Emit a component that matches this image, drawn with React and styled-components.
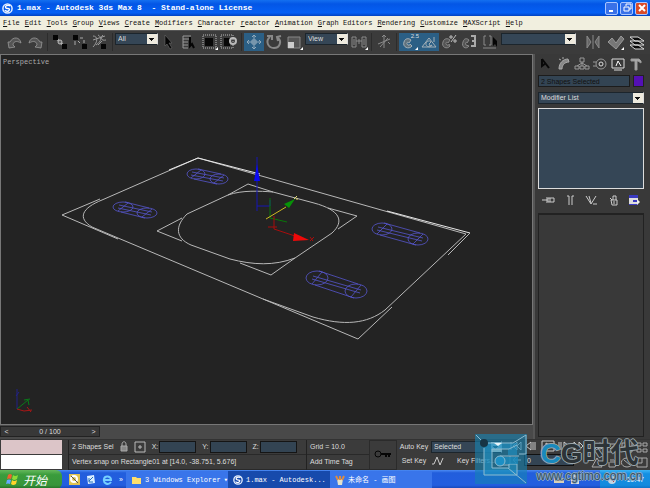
import React from "react";
import styled, { createGlobalStyle } from "styled-components";

const MENU = [
  ["F", "ile"], ["E", "dit"], ["T", "ools"], ["G", "roup"], ["V", "iews"],
  ["C", "reate"], ["M", "odifiers"], ["C", "haracter"], ["r", "eactor"],
  ["A", "nimation"], ["G", "raph Editors"], ["R", "endering"],
  ["C", "ustomize"], ["M", "AXScript"], ["H", "elp"],
];

const SwirlIcon = ({ size = 11 }) => (
  <svg width={size} height={size} viewBox="0 0 12 12" fill="none" aria-hidden="true">
    <circle cx="6" cy="6" r="5" stroke="#e6f0ff" strokeWidth="1.6" />
    <path d="M9 3C6 2 3 3 4 5s5 0 4 2.500-4 1.500-5 .5" stroke="#fff" strokeWidth="1.500" />
  </svg>
);

// toolbar glyphs share a 20x18 box
const glyphs = {
  undo: <path d="M3 9l1 6 6-1-2-2c0-3 3-5 8-2-1-6-8-7-11-1z" fill="#555" stroke="#999" strokeWidth=".8" />,
  redo: <path d="M17 9l-1 6-6-1 2-2c0-3-3-5-8-2 1-6 8-7 11-1z" fill="#555" stroke="#999" strokeWidth=".8" />,
  link: <><path d="M7 6l7 7" stroke="#aaa" strokeWidth="2" /><circle cx="10" cy="9" r="2" fill="#666" stroke="#bbb" /><path d="M3 2h5v5H3zM12 11h5v5h-5z" fill="#050505" stroke="none" /></>,
  unlink: <><path d="M5 8v4M8 8l2 2M10 5h3M14 7v3" stroke="#aaa" /><path d="M3 2h5v5H3zM12 11h5v5h-5z" fill="#050505" stroke="none" /></>,
  bind: <><path d="M3 3c5 0 5 6 0 11M8 2c4 2 4 6-2 10M13 2c-3 3-2 6 3 5M3 7l12-4M8 12l4-4" stroke="#999" /><path d="M11 11h5v5h-5z" fill="#050505" stroke="none" /></>,
  select: <path d="M6 2v11l2-2 3 5 2-1-3-5h3z" fill="#050505" stroke="#777" strokeWidth=".5" />,
  byName: <><path d="M4 3h8M4 6h6M4 9h5M4 12h5M4 15h5M4 3v12" stroke="#999" /><path d="M11 4v9l2-2 2 4" stroke="#050505" strokeWidth="2" /></>,
  region: <><path d="M4 2h13v13H4z" stroke="#bbb" strokeDasharray="1 1" /><path d="M6 5h8v8H6z" fill="#080808" stroke="none" /></>,
  windowing: <><path d="M2 2h12v13H2z" stroke="#bbb" strokeDasharray="1 1" /><path d="M5 5h6v8H5z" fill="#080808" stroke="none" /><circle cx="14" cy="8" r="3" stroke="#bbb" strokeWidth="2" /></>,
  move: <path d="M10 2v14M3 9h14M8 4l2-2 2 2M8 14l2 2 2-2M5 7L3 9l2 2M15 7l2 2-2 2M8 7h4v4H8z" stroke="#91a9ba" />,
  rotate: <path d="M6 4c-5 4-2 11 4 11 6 0 8-7 4-10M3 3h5v4M17 3l-4 1 1 4" stroke="#888" strokeWidth="2" />,
  scale: <><path d="M4 4h12v11H4z" fill="#555" stroke="#888" /><path d="M4 9h6v6H4z" fill="#ccc" stroke="none" /></>,
  pivot: <path d="M3 4h4v10H3zM13 4h4v10h-4zM7 8h6M10 6v5M5 6v6M15 6v6" />,
  manipulate: <path d="M10 3v12M4 11l12-5M6 14l8-9M8 4l2-2 2 2M14 9l2 2" />,
  snap: <path d="M13 13c-3 4-10 1-8-4 1-4 5-4 7-2l-2 3c-2-2-3 1-1 2s2-1 2-1z" fill="#60727d" stroke="#a5b1b8" />,
  angle: <><path d="M3 14L10 5l7 9z" stroke="#a5b1b8" /><path d="M13 12c-1 3-7 2-6-2 1-2 4-3 5-1l-2 2 1 2zM15 4v5" stroke="#a5b1b8" /></>,
  percent: <><path d="M11 13c-3 4-9 1-7-4 1-4 5-4 7-2l-2 3c-2-2-3 1-1 2s2-1 2-1z" fill="#555" /><path d="M11 3h2v2h-2zM15 7h2v2h-2zM17 2l-5 7" stroke="#bbb" /></>,
  spinner: <><path d="M10 13c-3 4-8 1-6-4 1-4 4-4 6-2l-2 3c-1-2-2 1-1 2z" fill="#555" /><path d="M12 3h4v10h-4M13 8h3" stroke="#aaa" strokeWidth="2" /></>,
  sets: <><path d="M6 3H4v9h2M9 3h2v9H9M3 15h13" /><path d="M13 4v9l2-2 2 3V8z" fill="#050505" stroke="none" /></>,
  mirror: <path d="M4 3v12l4-6zM16 3v12l-4-6zM10 2v14" fill="#666" />,
  align: <path d="M3 9l4-4 4 5 5-7 3 3-8 10z" fill="#777" stroke="#999" />,
  layers: <path d="M3 4h8l6 4H8zM3 8h8l6 4H8zM3 12h8l6 4H8z" fill="#0b0b0b" stroke="#ddd" />,
};

const Tool = ({ name, on, flyout, children }) => (
  <ToolButton type="button" aria-label={name} $on={on}>
    <svg width="20" height="18" viewBox="0 0 20 18" fill="none" stroke="#8a8a8a">
      {glyphs[name]}
      {flyout && <path d="M19 14v3h-3z" fill="#fff" stroke="none" />}
    </svg>
    {children && <ToolBadge>{children}</ToolBadge>}
  </ToolButton>
);

// capsule wireframe between two end ellipses, tilted along the slot
const Slot = ({ x1, y1, x2, y2, rx, ry }) => (
  <g stroke="#5656cc" strokeWidth=".8">
    <ellipse cx={x1} cy={y1} rx={rx} ry={ry} />
    <ellipse cx={x2} cy={y2} rx={rx} ry={ry} />
    <path d={`M${x1 + 2} ${y1 - ry}L${x2 + 2} ${y2 - ry}M${x1 - 2} ${y1 + ry}L${x2 - 2} ${y2 + ry}`} />
    <path d={`M${x1 - 4} ${y1 - 2}L${x2 + 5} ${y2 - 1}M${x1 - 5} ${y1 + 1}L${x2 + 4} ${y2 + 2}`} />
    <path d={`M${x1 + 5} ${y1 - ry + 1}L${x1 - 5} ${y1 + ry - 1}M${x2 + 5} ${y2 - ry + 1}L${x2 - 5} ${y2 + ry - 1}`} />
  </g>
);

const Scene = () => (
  <SceneSvg viewBox="1 55 531 369" fill="none" aria-label="Wireframe scene">
    <g stroke="#b8b8b8">
      <path d="M100 199L62 215l56 24" />
      <path d="M198 158L102 200c-20 8-25 18-10 27l26 11 145 61 50 18c31 9 54 7 72-7l81-76L198 158" />
      <path d="M169 170l29-12 62 16M387 211l83 22" stroke="#e8e8e8" />
      <path d="M470 233l-22 22M263 299l95 40 34-32" />
      <path d="M228 195l20-11 25 8M182 218l-25 13 25 10M328 208l29 8-19 13M240 263l31 12 24-17" />
      <path d="M228 195c14-5 32-4 45-3l41 11c26 7 31 18 18 30l-37 25c-21 8-42 7-65 1l-39-14c-16-7-16-19-4-31z" />
    </g>
    <Slot x1={196} y1={174} x2={219} y2={179} rx={9} ry={5} />
    <Slot x1={123} y1={207} x2={147} y2={213} rx={10} ry={5} />
    <Slot x1={382} y1={229} x2={418} y2={239} rx={10} ry={6} />
    <Slot x1={317} y1={278} x2={356} y2={291} rx={11} ry={7} />
    <path d="M257 157v54M257 206h13v-6" stroke="#1616b5" />
    <path d="M257 164l3 17h-6z" fill="#0909f2" />
    <path d="M270 198v20l17 4" stroke="#087608" />
    <path d="M266 219l20-12" stroke="#cdb821" />
    <path d="M284 204l11-5-6 9z" fill="#079207" />
    <path d="M294 199l3-3M296 199h2" stroke="#e5dc70" />
    <path d="M274 216v13l30 10M268 227h9M310 237l3 4M314 237l-4 4" stroke="#a80d0d" />
    <path d="M294 233l15 7-16 1z" fill="#ed0909" />
    <path d="M17 389v20M19 392l-3 4" stroke="#222288" />
    <path d="M17 409l11-9 1 5M24 400l6-1" stroke="#087c18" />
    <path d="M17 409l7 2 8-1M27 407l4 5" stroke="#a81616" />
  </SceneSvg>
);

const panelTabs = [
  ["Create", <path key="p" d="M4 3l7 9M4 3v7l4-3" stroke="#080808" strokeWidth="2" />],
  ["Modify", <path key="p" d="M3 13C3 7 7 3 12 3l1 3C8 6 6 10 6 13zM3 3l2 1M7 1v2" fill="#888" stroke="#aaa" />],
  ["Hierarchy", <path key="p" d="M6 2h4v4H6zM1 10h4v3H1zM6 10h4v3H6zM11 10h4v3h-4zM8 6v4M3 10l5-3 5 3" />],
  ["Motion", <g key="p"><circle cx="9" cy="8" r="5" /><circle cx="9" cy="8" r="2" stroke="#ddd" /><path d="M1 6h3M1 10h3" /></g>],
  ["Display", <g key="p"><path d="M2 3h12v9H2zM4 14h8" stroke="#ddd" /><path d="M6 10l2-5 3 5" stroke="#fff" /></g>],
  ["Utilities", <path key="p" d="M3 3h8l2 2v2l-3-2H9v9H7V5H3z" fill="#aaa" />],
];

const stackTools = [
  ["Pin stack", "M1 7h5M6 4v6M7 5h6v4H7zM9 5v4"],
  ["Show end result", "M6 3v9M9 3v9M4 3h2M9 3h2"],
  ["Make unique", "M2 3l5 8 5-8M5 3l2 7M9 11h4"],
  ["Remove modifier", "M5 7h6v5H6zM7 7V3h3v4M4 5l2 2M8 8v3"],
];

const playback = [
  ["Go to start", "M3 2v8M9 2L5 6l4 4zM13 2L9 6l4 4z"],
  ["Previous frame", "M7 2L2 6l5 4zM9 2v8M11 2v8"],
  ["Play", "M2 1h12v10H2zM6 3l5 3-5 3z"],
  ["Next frame", "M3 2v8M5 2v8M8 2l5 4-5 4z"],
  ["Go to end", "M2 2l4 4-4 4zM7 2l4 4-4 4zM13 2v8"],
];

const viewTools = [
  ["Zoom", "M2 11l4-4M10 2a3 3 0 100 6 3 3 0 000-6"],
  ["Zoom all", "M2 3h8v8H2zM5 8l7-6"],
  ["Zoom extents", "M2 2h4M2 2v4M12 2v4M8 11h4V8M4 5h5v4H4z"],
  ["Zoom extents all", "M2 2h4v3H2zM8 2h4v3H8zM2 8h4v3H2zM8 8h4v3H8z"],
  ["Field of view", "M7 2L2 11h10z"],
  ["Pan", "M4 6v5h6l2-5M6 7V3M8 7V3M10 7V4"],
  ["Arc rotate", "M7 2a5 4 0 100 9 5 4 0 000-9M4 4l6 5"],
  ["Maximize", "M2 2h10v9H2zM7 2v5H2"],
];

const LineIcon = ({ d, color = "#ccc" }) => (
  <svg width="15" height="14" viewBox="0 0 15 14" fill="none" stroke={color} aria-hidden="true">
    <path d={d} />
  </svg>
);

const Watermark = () => (
  <WatermarkBox>
    <svg width="52" height="50" viewBox="0 0 52 50" fill="none" aria-hidden="true">
      <path d="M0 0h52v50H0z" fill="#1583b4" fillOpacity=".6" />
      <path d="M9 14v27h33V30h-9v4H17V15h16v6h9V9H12" fill="#1f91c4" fillOpacity=".6" />
      <path d="M12 9h26L51 1v19h-7M9 14v27h33M17 15h17l8-4M17 15v19h16l18 15M42 41V30h-8v4" stroke="#8dbbd0" />
      <path d="M25 22h19M25 31h9" stroke="#8dbbd0" />
      <path d="M27 23h16v7H27z" fill="#1b8bbd" fillOpacity=".8" />
      <circle cx="25" cy="27" r="5" fill="#1c8fc4" stroke="#8dbbd0" />
      <path d="M1 1l6 6" stroke="#8dbbd0" />
      <circle cx="9" cy="9" r="4" fill="#173445" />
      <path d="M19 9l4 3 4-3z" fill="#eaf5fa" />
    </svg>
    <WatermarkText>
      <WatermarkTitle><b>C</b>G时代</WatermarkTitle>
      <WatermarkUrl>www.cgtimo.com.cn</WatermarkUrl>
    </WatermarkText>
  </WatermarkBox>
);

const App = () => (
  <>
    <GlobalStyle />
    <Desktop>
      <TitleBar>
        <SwirlIcon />
        <Title>{"1.max - Autodesk 3ds Max 8  - Stand-alone License"}</Title>
        <WindowButton type="button" aria-label="Minimize">
          <svg width="10" height="10"><path d="M2 7h4v2H2z" fill="#fff" /></svg>
        </WindowButton>
        <WindowButton type="button" aria-label="Restore">
          <svg width="10" height="10" fill="none" stroke="#fff"><path d="M4 3V1h5v5H7M2 4h5v4H2z" /></svg>
        </WindowButton>
        <WindowButton type="button" aria-label="Close" $close>
          <svg width="10" height="10" stroke="#fff" strokeWidth="2"><path d="M2 2l6 6M8 2L2 8" /></svg>
        </WindowButton>
      </TitleBar>

      <MenuBar>
        {MENU.map(([key, rest]) => (
          <MenuItem type="button" key={key + rest}><u>{key}</u>{rest}</MenuItem>
        ))}
      </MenuBar>

      <Toolbar>
        <ToolGroup><Tool name="undo" /><Tool name="redo" /></ToolGroup>
        <Divider />
        <ToolGroup><Tool name="link" /><Tool name="unlink" /><Tool name="bind" /></ToolGroup>
        <Divider />
        <ComboSlot><Combo aria-label="Selection filter" $width="43px"><option>All</option></Combo></ComboSlot>
        <ToolGroup>
          <Tool name="select" /><Tool name="byName" /><Tool name="region" flyout /><Tool name="windowing" />
        </ToolGroup>
        <Divider />
        <ToolGroup><Tool name="move" on /><Tool name="rotate" /><Tool name="scale" flyout /></ToolGroup>
        <ComboSlot><Combo aria-label="Coordinate system" $width="43px"><option>View</option></Combo></ComboSlot>
        <ToolGroup><Tool name="pivot" flyout /></ToolGroup>
        <Divider />
        <ToolGroup><Tool name="manipulate" /></ToolGroup>
        <Divider />
        <ToolGroup>
          <Tool name="snap" on flyout>2.5</Tool><Tool name="angle" on /><Tool name="percent" /><Tool name="spinner" />
        </ToolGroup>
        <ToolGroup><Tool name="sets" /></ToolGroup>
        <ComboSlot><Combo aria-label="Named selection sets" $width="75px"><option></option></Combo></ComboSlot>
        <ToolGroup $end><Tool name="mirror" /><Tool name="align" flyout /><Tool name="layers" /></ToolGroup>
      </Toolbar>

      <Workspace>
        <ViewportColumn>
          <Viewport>
            <ViewportLabel>Perspective</ViewportLabel>
            <Scene />
          </Viewport>
          <TimeRow>
            <TimeSlider>
              <TimeArrow type="button" aria-label="Previous">&lt;</TimeArrow>
              <span>0 / 100</span>
              <TimeArrow type="button" aria-label="Next">&gt;</TimeArrow>
            </TimeSlider>
          </TimeRow>
        </ViewportColumn>
        <CommandPanel>
          <PanelTabs>
            {panelTabs.map(([label, icon]) => (
              <IconButton type="button" key={label} aria-label={label}>
                <svg width="16" height="15" fill="none" stroke="#999">{icon}</svg>
              </IconButton>
            ))}
          </PanelTabs>
          <NameRow>
            <NameInput aria-label="Object name" defaultValue="2 Shapes Selected" />
            <Swatch type="button" aria-label="Object colour" />
          </NameRow>
          <Combo aria-label="Modifier List" $width="100%"><option>Modifier List</option></Combo>
          <ModifierStack />
          <StackTools>
            {stackTools.map(([label, d]) => (
              <IconButton type="button" key={label} aria-label={label}><LineIcon d={d} /></IconButton>
            ))}
            <IconButton type="button" aria-label="Configure sets">
              <svg width="14" height="14"><path d="M2 2h9v10H2z" fill="#ddd" /><path d="M2 2h9v3H2zM2 11h9v1H2zM6 7h5v2H6z" fill="#3a3ac0" /><path d="M10 6l3 3-3 3z" fill="#eee" /></svg>
            </IconButton>
          </StackTools>
          <Rollout />
        </CommandPanel>
      </Workspace>

      <StatusBar>
        <Listener><ListenerLine $pink /><ListenerLine /></Listener>
        <StatusMain>
          <StatusRow>
            <span>2 Shapes Sel</span>
            <svg width="8" height="12" fill="none" stroke="#aaa"><path d="M2 5V3c0-3 4-3 4 0v2" /><path d="M1 5h6v5H1z" fill="#888" /></svg>
            <svg width="12" height="12" fill="none" stroke="#bbb"><path d="M1 1h10v10H1zM6 4v4M4 6h4" /></svg>
            {["X", "Y", "Z"].map((axis) => (
              <AxisLabel key={axis}>{axis}:<AxisInput /></AxisLabel>
            ))}
          </StatusRow>
          <StatusRow><span>Vertex snap on Rectangle01 at [14.0, -38.751, 5.676]</span></StatusRow>
        </StatusMain>
        <GridInfo>
          <StatusRow><span>Grid = 10.0</span></StatusRow>
          <StatusRow><span>Add Time Tag</span></StatusRow>
        </GridInfo>
        <KeyButton type="button" aria-label="Set keys">
          <svg width="18" height="10" fill="none" stroke="#050505"><circle cx="4" cy="4" r="3" /><path d="M7 4h10M12 5v2M15 5v2" strokeWidth="2" /></svg>
        </KeyButton>
        <KeyModes>
          <FlatButton type="button">Auto Key</FlatButton>
          <FlatButton type="button">Set Key</FlatButton>
        </KeyModes>
        <KeyOptions>
          <Combo aria-label="Key selection" $width="71px"><option>Selected</option></Combo>
          <KeyFilterRow>
            <LineIcon d="M1 10h2l3-7 3 8 3-7" />
            <FlatButton type="button">Key Filters...</FlatButton>
          </KeyFilterRow>
        </KeyOptions>
        <Playback>
          <PlayRow>
            {playback.map(([label, d]) => (
              <IconButton type="button" key={label} aria-label={label}><LineIcon d={d} /></IconButton>
            ))}
          </PlayRow>
          <PlayRow><LineIcon d="M2 2v8M5 6h8M8 3L5 6l3 3" /><FrameInput aria-label="Frame" defaultValue="0" /></PlayRow>
        </Playback>
        <ViewControls>
          {viewTools.map(([label, d]) => (
            <IconButton type="button" key={label} aria-label={label}><LineIcon d={d} color="#aaa" /></IconButton>
          ))}
        </ViewControls>
      </StatusBar>

      <Taskbar>
        <StartButton type="button">
          <svg width="14" height="13" viewBox="0 0 14 13">
            <path d="M2 2q2-2 4 0L5 6Q3 5 1 6z" fill="#f06030" /><path d="M7 2q2 2 5 0l-1 4q-3 2-5 0z" fill="#8ddc35" />
            <path d="M1 7q2-1 4 0l-1 4Q2 10 0 11z" fill="#65a9ff" /><path d="M6 7q2 2 5 0l-1 4q-3 2-5 0z" fill="#ffd52b" />
          </svg>
          开始
        </StartButton>
        <QuickLaunch>
          <svg width="11" height="11"><path d="M0 0h11v11H0z" fill="#dfc351" /><circle cx="5" cy="5" r="3" fill="none" stroke="#fff" strokeWidth="2" /><path d="M2 2l7 7" stroke="#555" /></svg>
          <svg width="10" height="11"><path d="M1 2l7-1 1 8-7 1z" fill="#dcefff" /><path d="M3 7l4-4M3 4v4h4" stroke="#2470bb" fill="none" /></svg>
          <svg width="11" height="11" fill="none" stroke="#75cfff" strokeWidth="2"><path d="M9 8c-3 4-8 1-7-3s7-3 7 1H2" /></svg>
          <span>»</span>
        </QuickLaunch>
        <Task type="button">
          <svg width="11" height="10"><path d="M1 2h4l1 1h4v6H1z" fill="#ffdf6b" /></svg>
          <span>3 Windows Explorer</span><Caret>▾</Caret>
        </Task>
        <Task type="button" $active><SwirlIcon size={10} /><span>1.max - Autodesk...</span></Task>
        <Task type="button">
          <svg width="10" height="11"><path d="M2 4h6l-1 6H3z" fill="#e3e2cc" /><path d="M3 5L1 1M5 5V1M7 5l2-4" stroke="#db8c45" strokeWidth="2" /></svg>
          <span>未命名 - 画图</span>
        </Task>
        <LanguageBar>
          <svg width="10" height="9"><path d="M0 3h10v5H0z" fill="#d8d0b8" /><path d="M1 5h8M3 2h4" stroke="#333" /></svg>
          <svg width="8" height="9"><path d="M0 0h8v9H0z" fill="#ddd" /><path d="M3 3h2v3H3" stroke="#345" fill="none" /></svg>
        </LanguageBar>
        <Tray>
          <svg width="8" height="8"><circle cx="4" cy="4" r="4" fill="#c3d5e2" /><path d="M2 2l4 4" stroke="#b44" /></svg>
          <Clock>10:47</Clock>
        </Tray>
      </Taskbar>
      <Watermark />
    </Desktop>
  </>
);

const GlobalStyle = createGlobalStyle`
  * { box-sizing: border-box; }
  body {
    margin: 0;
    background: #393939;
    color: #ddd;
    font: 7px/10px "Liberation Sans", "Noto Sans CJK SC", sans-serif;
  }
  button, input, select {
    margin: 0;
    padding: 0;
    border: 0;
    border-radius: 0;
    font: inherit;
    color: inherit;
    background: none;
  }
  svg { display: block; flex-shrink: 0; }
`;

const Desktop = styled.div`
  position: relative;
  min-height: 100vh;
  display: flex;
  flex-direction: column;
`;

const TitleBar = styled.header`
  display: flex;
  align-items: center;
  gap: 2px;
  height: 16px;
  padding: 0 2px;
  background: linear-gradient(#1470f0, #0356e6 25%, #0560f4 80%, #0242c0);
`;

const Title = styled.h1`
  flex: 1;
  margin: 0 0 0 2px;
  color: #fff;
  font: bold 8px/14px "Liberation Mono", monospace;
  white-space: pre;
`;

const WindowButton = styled.button`
  display: grid;
  place-items: center;
  width: 13px;
  height: 13px;
  border: 1px solid #a9c5ff;
  border-radius: 2px;
  background: ${(p) => (p.$close ? "#d94b29" : "#3971e8")};
`;

const MenuBar = styled.nav`
  display: flex;
  align-items: center;
  gap: 5px;
  height: 14px;
  padding: 0 3px;
  background: #f1efdf;
`;

const MenuItem = styled.button`
  color: #111;
  font: 7px/12px "Liberation Mono", monospace;
  white-space: nowrap;
`;

const Toolbar = styled.div`
  display: flex;
  align-items: flex-start;
  gap: 1px;
  height: 24px;
  padding: 2px 3px 0 5px;
  background: #3b3b3b;
  border-top: 1px solid #555;
`;

const ToolGroup = styled.div`
  display: flex;
  gap: ${(p) => (p.$end ? "2px" : 0)};
  margin-left: ${(p) => (p.$end ? "auto" : 0)};
`;

const ToolButton = styled.button`
  position: relative;
  width: 20px;
  height: 18px;
  background: ${(p) => (p.$on ? "#2b5f85" : "transparent")};
`;

const ToolBadge = styled.span`
  position: absolute;
  top: 0;
  right: 0;
  color: #ddd;
  font-size: 6px;
  line-height: 7px;
`;

const Divider = styled.span`
  width: 1px;
  height: 18px;
  margin: 0 1px;
  background: #2c2c2c;
`;

const ComboSlot = styled.div`
  display: flex;
`;

const Combo = styled.select`
  appearance: none;
  width: ${(p) => p.$width};
  height: 12px;
  padding: 0 12px 0 2px;
  border: 1px solid #1c252c;
  border-right-color: #ddd;
  color: #ddd;
  background:
    linear-gradient(#111, #111) right 3px top 4px / 5px 1px no-repeat,
    linear-gradient(#111, #111) right 4px top 5px / 3px 1px no-repeat,
    linear-gradient(#111, #111) right 5px top 6px / 1px 1px no-repeat,
    linear-gradient(#eeeade, #eeeade) right / 10px 100% no-repeat,
    #354656;
`;

const Workspace = styled.main`
  flex: 1;
  display: grid;
  grid-template-columns: minmax(0, 1fr) 117px;
`;

const ViewportColumn = styled.div`
  display: flex;
  flex-direction: column;
`;

const Viewport = styled.section`
  flex: 1;
  display: grid;
  border: 1px solid #777;
  background: #232323;
`;

const ViewportLabel = styled.span`
  grid-area: 1 / 1;
  padding: 2px;
  color: #aaa;
  font-family: "Liberation Mono", monospace;
`;

const SceneSvg = styled.svg`
  grid-area: 1 / 1;
  width: 100%;
  height: 100%;
`;

const CommandPanel = styled.aside`
  display: flex;
  flex-direction: column;
  padding: 0 6px 0 3px;
  border-left: 2px solid #555;
`;

const PanelTabs = styled.div`
  display: flex;
  justify-content: space-between;
  align-items: center;
  height: 18px;
  margin-bottom: 3px;
`;

const IconButton = styled.button`
  display: grid;
  place-items: center;
`;

const NameRow = styled.div`
  display: flex;
  gap: 3px;
  margin-bottom: 5px;
`;

const NameInput = styled.input`
  flex: 1;
  min-width: 0;
  height: 12px;
  padding: 0 2px;
  border: 1px solid #1c1c1c;
  background: #334453;
  color: #111;
`;

const Swatch = styled.button`
  width: 11px;
  height: 12px;
  border: 1px solid #222;
  background: #5410b5;
`;

const ModifierStack = styled.div`
  height: 81px;
  margin-top: 4px;
  border: 1px solid #ddd;
  background: #354656;
`;

const StackTools = styled.div`
  display: flex;
  justify-content: space-between;
  align-items: center;
  height: 21px;
  padding: 0 3px;
`;

const Rollout = styled.div`
  flex: 1;
  margin: 3px 0 2px;
  border: 1px solid #222;
  border-top-width: 2px;
`;

const TimeRow = styled.div`
  height: 14px;
  padding: 1px 0;
  background: #494949;
`;

const TimeSlider = styled.div`
  display: flex;
  align-items: center;
  justify-content: space-between;
  width: 100px;
  height: 11px;
  border: 1px solid #222;
  background: #383838;
`;

const TimeArrow = styled.button`
  width: 11px;
  height: 9px;
`;

const StatusBar = styled.footer`
  display: flex;
  height: 31px;
  border-top: 1px solid #333;
  background: #3b3b3b;
  white-space: nowrap;
`;

const Listener = styled.div`
  width: 63px;
  padding: 0 1px;
`;

const ListenerLine = styled.div`
  height: 14px;
  margin-bottom: 1px;
  background: ${(p) => (p.$pink ? "#dcc5c8" : "#fff")};
`;

const StatusMain = styled.div`
  width: 238px;
  margin-left: 5px;
  border-left: 1px solid #222;
`;

const StatusRow = styled.div`
  display: flex;
  align-items: center;
  gap: 6px;
  height: 15px;
  padding: 0 3px;
  border-bottom: 1px solid #292929;
`;

const AxisLabel = styled.label`
  display: flex;
  align-items: center;
  gap: 1px;
`;

const AxisInput = styled.input`
  width: 37px;
  height: 12px;
  border: 1px solid #151515;
  background: #334453;
`;

const GridInfo = styled.div`
  width: 63px;
  border-left: 1px solid #222;
`;

const KeyButton = styled.button`
  display: grid;
  place-items: center;
  width: 28px;
  border: 1px solid #2b2b2b;
`;

const KeyModes = styled.div`
  display: flex;
  flex-direction: column;
  width: 34px;
  padding: 0 1px;
`;

const FlatButton = styled.button`
  height: 14px;
  white-space: nowrap;
`;

const KeyOptions = styled.div`
  width: 72px;
  padding-top: 1px;
`;

const KeyFilterRow = styled.div`
  display: flex;
  gap: 11px;
  align-items: center;
  height: 16px;
`;

const Playback = styled.div`
  flex: 1;
  padding-left: 5px;
`;

const PlayRow = styled.div`
  display: flex;
  gap: 1px;
  height: 14px;
`;

const FrameInput = styled.input`
  width: 50px;
  height: 12px;
  padding: 0 2px;
  border: 1px solid #111;
  background: #334453;
`;

const ViewControls = styled.div`
  display: grid;
  grid-template-columns: repeat(4, 15px);
`;

const Taskbar = styled.footer`
  display: flex;
  height: 19px;
  background: linear-gradient(#4c8bf3, #225edc 15%, #235ee0 80%, #1741ad);
  color: #fff;
`;

const StartButton = styled.button`
  display: flex;
  align-items: center;
  gap: 3px;
  width: 62px;
  padding-left: 6px;
  border-radius: 0 6px 6px 0;
  background: linear-gradient(#65b85c, #3a9c3c 25%, #38953a 80%, #206b23);
  font: italic 12px/17px "Noto Sans CJK SC", sans-serif;
`;

const QuickLaunch = styled.div`
  display: flex;
  align-items: center;
  gap: 6px;
  width: 64px;
  padding-left: 7px;
`;

const Task = styled.button`
  display: flex;
  align-items: center;
  gap: 3px;
  width: 102px;
  margin-top: 1px;
  padding: 0 5px;
  background: ${(p) => (p.$active ? "#174aac" : "#3975ea")};
  font: 7px/14px "Liberation Mono", "Noto Sans CJK SC", monospace;
  white-space: nowrap;
`;

const Caret = styled.span`
  margin-left: auto;
`;

const LanguageBar = styled.div`
  display: flex;
  align-items: center;
  gap: 7px;
  width: 46px;
  margin-left: auto;
`;

const Tray = styled.div`
  display: flex;
  align-items: center;
  width: 50px;
  padding: 0 6px 0 8px;
  background: linear-gradient(#3db4f5, #1490e2 20%, #138ade 80%, #0f6cc0);
`;

const Clock = styled.time`
  margin-left: auto;
`;

const WatermarkBox = styled.div`
  position: absolute;
  right: 3px;
  bottom: 5px;
  display: flex;
  gap: 5px;
  pointer-events: none;
`;

const WatermarkText = styled.div`
  width: 115px;
  text-align: center;
`;

const WatermarkTitle = styled.div`
  height: 35px;
  color: #2c3337;
  font: bold 28px/40px "Liberation Sans", "Noto Sans CJK SC", sans-serif;
  text-shadow: 1px 0 #9aa5aa, -1px 0 #9aa5aa, 0 1px #9aa5aa, 0 -1px #9aa5aa;

  b { color: #1989bd; }
`;

const WatermarkUrl = styled.div`
  color: #33505f;
  font-size: 12px;
  line-height: 14px;
  text-shadow: 1px 0 #8fa9c4, -1px 0 #8fa9c4, 0 1px #8fa9c4, 0 -1px #8fa9c4;
`;

export default App;
